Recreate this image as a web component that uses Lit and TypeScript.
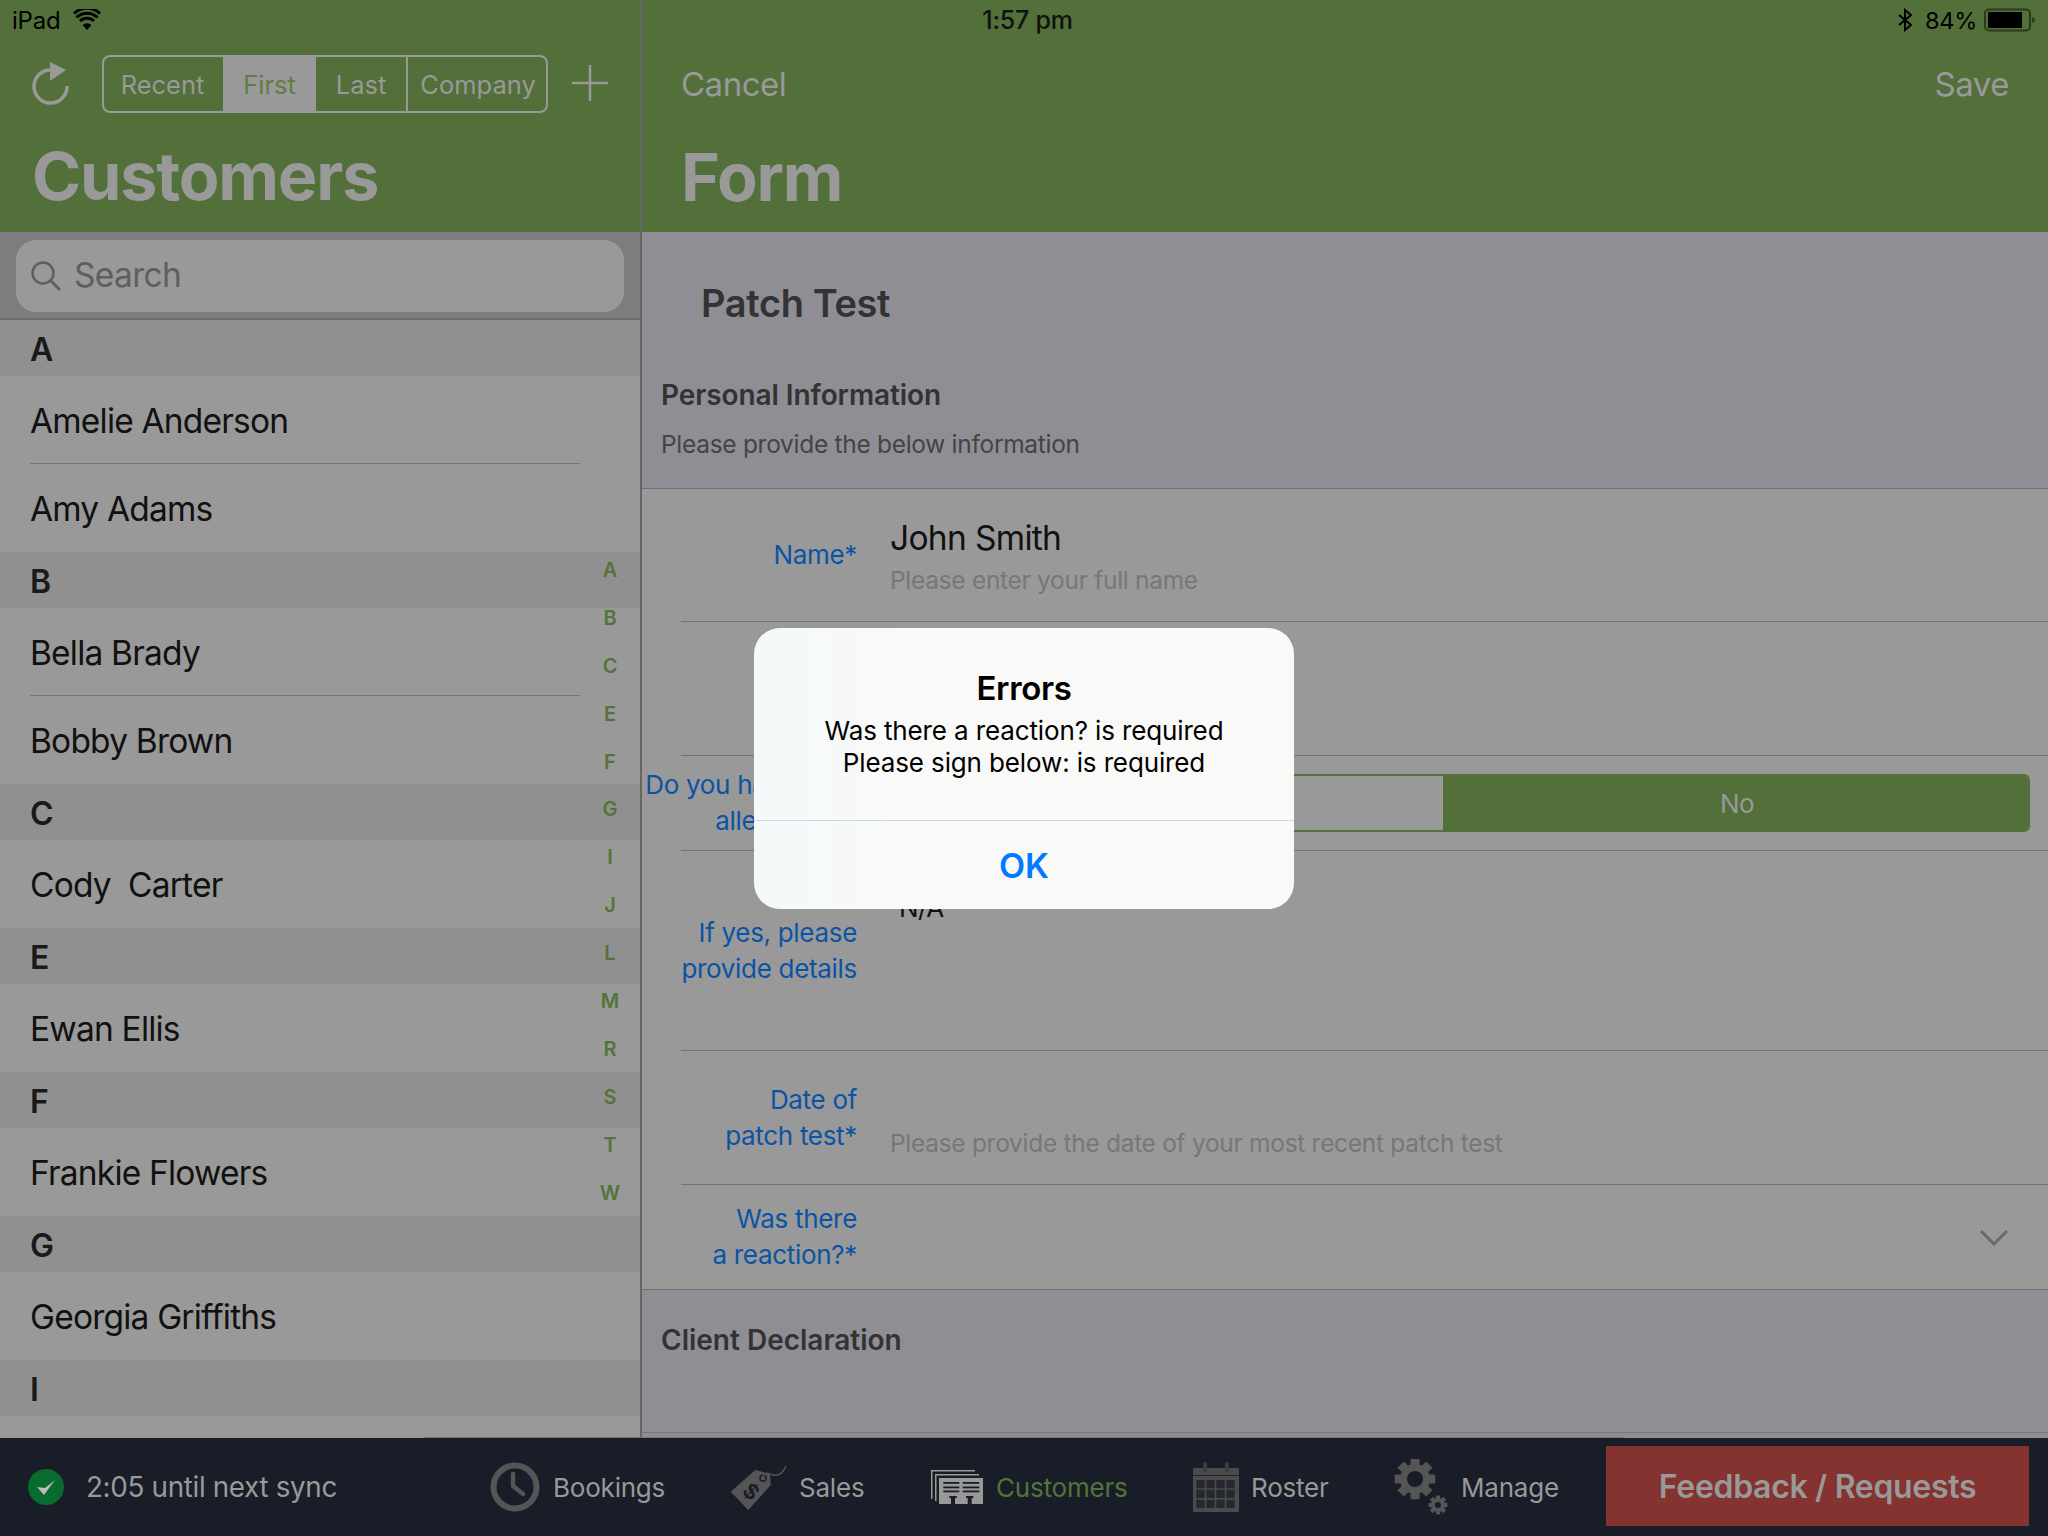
import { LitElement, html, css, svg } from "lit";
import { customElement } from "lit/decorators.js";

const SECTIONS: [string, string[]][] = [
  ["A", ["Amelie Anderson", "Amy Adams"]],
  ["B", ["Bella Brady", "Bobby Brown"]],
  ["C", ["Cody  Carter"]],
  ["E", ["Ewan Ellis"]],
  ["F", ["Frankie Flowers"]],
  ["G", ["Georgia Griffiths"]],
  ["I", []],
];
const INDEX = "ABCEFGIJLMRSTW".split("");

const gear = (cx: number, cy: number, r: number, hole: number, color: string, bg: string) => svg`
  ${[0, 45, 90, 135].map(
    (a) => svg`<rect x=${cx - r * 0.3} y=${cy - r * 1.35} width=${r * 0.6} height=${r * 2.7} fill=${color} transform="rotate(${a} ${cx} ${cy})"/>`
  )}
  <circle cx=${cx} cy=${cy} r=${r} fill=${color}/>
  <circle cx=${cx} cy=${cy} r=${hole} fill=${bg}/>`;

@customElement("app-root")
export class AppRoot extends LitElement {
  static styles = css`
    :host {
      display: block;
      width: 2048px;
      height: 1536px;
      position: relative;
      overflow: hidden;
      font-family: Inter, "Liberation Sans", sans-serif;
      background: #999;
      color: #111;
    }
    .screen { display: flex; flex-direction: column; height: 1536px; }
    .panes { display: flex; height: 1438px; }
    .left { width: 640px; flex: none; display: flex; flex-direction: column; position: relative; border-right: 2px solid #666; overflow: hidden; }
    .right { flex: 1; display: flex; flex-direction: column; overflow: hidden; }

    .status { position: absolute; left: 0; top: 0; width: 2048px; height: 40px; display: grid; grid-template-columns: 1fr auto 1fr; align-items: center; font-size: 24px; color: #000; letter-spacing: -0.01em; z-index: 2; box-sizing: border-box; padding: 0 12px 0 12px; }
    .st-l { display: flex; align-items: center; gap: 13px; }
    .st-c { font-weight: 500; font-size: 25px; padding-left: 7px; color: #111; }
    .st-r { display: flex; align-items: center; justify-content: flex-end; gap: 7px; }
    .st-r span { margin-left: 5px; font-size: 23.5px; }

    .head { height: 232px; background: #536f3a; box-sizing: border-box; flex: none; }
    .lhead { padding: 55px 0 0 30px; }
    .tools { display: flex; align-items: center; height: 58px; }
    .seg { display: flex; margin-left: 32px; height: 58px; width: 446px; box-sizing: border-box; border: 2px solid #999; border-radius: 8px; overflow: hidden; color: #999; font-size: 25.500px; }
    .seg div { display: flex; align-items: center; justify-content: center; box-sizing: border-box; }
    .seg .s1 { width: 119px; padding-right: 2px; }
    .seg .s2 { width: 93px; background: #999; color: #5f7f40; }
    .seg .s3 { width: 92px; border-right: 2px solid #999; }
    .seg .s4 { flex: 1; padding-left: 2px; }
    .plus { margin-left: 24px; transform: translateY(-1px); }
    .big { font-size: 66.500px; font-weight: 700; color: #999; letter-spacing: -0.018em; line-height: 78px; }
    .lhead .big { margin: 24px 0 0 2px; }

    .searchwrap { height: 88px; flex: none; box-sizing: border-box; background: #7d7d7f; border-bottom: 2px solid #6e6e6e; padding: 8px 16px 6px; }
    .search { height: 72px; border-radius: 20px; background: #999; display: flex; align-items: center; padding-left: 14px; gap: 12px; color: #5f5f5f; font-size: 33.500px; letter-spacing: -0.02em; }
    .search span { transform: translateY(-1px); }

    .sec { height: 56px; flex: none; box-sizing: border-box; padding: 2px 0 0 30px; background: #909090; display: flex; align-items: center; font-size: 32px; font-weight: 600; color: #1a1a1a; }
    .row { height: 88px; flex: none; box-sizing: border-box; display: flex; align-items: center; margin-left: 30px; width: 550px; font-size: 33.500px; padding-top: 1px; color: #111; letter-spacing: -0.024em; white-space: pre; }
    .row.sep { border-bottom: 1px solid #767676; padding-top: 2px; }
    .index { position: absolute; left: 590px; top: 547px; width: 40px; display: flex; flex-direction: column; align-items: center; color: #557339; font-size: 20px; font-weight: 600; }
    .index span { height: 47.900px; line-height: 47.900px; }

    .rhead { padding: 48px 39px 0 39px; }
    .nav { display: flex; justify-content: space-between; align-items: center; height: 72px; color: #999; font-size: 33px; letter-spacing: -0.015em; }
    .rhead .big { margin: 18px 0 0 0; }

    .intro { height: 257px; flex: none; box-sizing: border-box; background: #8f8e94; border-bottom: 1px solid #707070; padding: 46px 0 0 19px; color: #333; }
    .intro h1 { margin: 0 0 0 40px; font-size: 38px; line-height: 50px; font-weight: 600; letter-spacing: -0.01em; }
    .intro h2 { margin: 49px 0 0 0; font-size: 28px; line-height: 36px; font-weight: 600; letter-spacing: -0.003em; }
    .intro p { margin: 14px 0 0 0; font-size: 24.500px; line-height: 34px; color: #444; letter-spacing: -0.012em; }

    .f { display: flex; flex: none; box-sizing: border-box; margin-left: 39px; border-bottom: 1px solid #757575; }
    .f.last { margin-left: 0; padding-left: 39px; border-bottom-color: #707070; }
    .lab { width: 176px; flex: none; display: flex; flex-direction: column; align-items: flex-end; color: #0b53a3; font-size: 26px; line-height: 36px; white-space: nowrap; letter-spacing: -0.012em; }
    .val { margin-left: 33px; flex: 1; font-size: 33.500px; position: relative; letter-spacing: -0.02em; }
    .hint { font-size: 24.500px; color: #777; letter-spacing: -0.012em; }
    .h1 { height: 133px; } .h1 .lab { padding-top: 48px; } .h1 .val { padding-top: 25px; line-height: 48px; }
    .h1 .hint { line-height: 36px; }
    .h2 { height: 134px; }
    .h3 { height: 95px; }
    .h3 .lab { padding-top: 11px; }
    .wide1 { margin-right: -1px; padding-right: 13px; }
    .wide2 { padding-right: 16px; }
    .toggle { position: absolute; left: 0; right: 18px; top: 18px; height: 58px; display: flex; box-sizing: border-box; border: 2px solid #536f3a; border-radius: 6px; overflow: hidden; }
    .toggle .off { flex: 1; }
    .toggle .on { width: 585px; background: #536f3a; color: #999; display: flex; align-items: center; justify-content: center; font-size: 26px; padding-left: 3px; box-sizing: border-box; }
    .h4 { height: 200px; } .h4 .lab { padding-top: 64px; } .h4 .val { font-size: 26px; line-height: 36px; padding: 39px 0 0 9px; }
    .h5 { height: 134px; } .h5 .lab { padding-top: 31px; } .h5 .val { padding-top: 74px; line-height: 36px; }
    .h6 { height: 105px; } .h6 .lab { padding-top: 16px; } .h6 .val { display: flex; justify-content: flex-end; padding: 45px 40px 0 0; }

    .outro { flex: 1; background: #8f8e94; box-sizing: border-box; padding-top: 32px; color: #333; display: flex; flex-direction: column; }
    .outro h2 { margin: 0 0 0 19px; font-size: 28px; line-height: 36px; font-weight: 600; }
    .outro i { display: block; margin-top: 74px; border-top: 1px solid #767676; }

    .bar { height: 98px; flex: none; background: #181d27; display: flex; align-items: center; box-sizing: border-box; position: relative; color: #999; font-size: 26px; letter-spacing: -0.008em; }
    .bar::before { content: ""; position: absolute; left: 424px; width: 1200px; top: -1px; height: 1px; background: #787878; }
    .sync { display: flex; align-items: center; margin-left: 28px; gap: 22px; width: 450px; flex: none; font-size: 27.800px; letter-spacing: -0.012em; }
    .tab { display: flex; align-items: center; flex: none; }
    .tab.on { color: #557339; }
    .t1 { width: 252px; padding-left: 12px; box-sizing: border-box; gap: 13px; }
    .t2 { width: 201px; gap: 9px; }
    .t3 { width: 262px; gap: 13px; }
    .t4 { width: 201px; gap: 12px; }
    .t5 { gap: 11px; }
    .fb { margin-left: auto; margin-right: 19px; width: 423px; height: 80px; margin-top: -2px; background: #843330; display: flex; align-items: center; justify-content: center; font-size: 32px; font-weight: 600; color: #999; letter-spacing: -0.01em; }

    .modal { position: absolute; left: 754px; top: 628px; width: 540px; height: 281px; border-radius: 26px; background: linear-gradient(90deg, #f5f9fa, #f9f9f8 35%); z-index: 3; display: flex; flex-direction: column; color: #000; text-align: center; }
    .m-top { height: 193px; flex: none; box-sizing: border-box; padding-top: 40px; border-bottom: 1px solid #cfd8dc; }
    .m-top h3 { margin: 0; font-size: 33px; line-height: 40px; font-weight: 600; letter-spacing: -0.01em; }
    .m-top p { margin: 7px 0 0; font-size: 26px; line-height: 32px; letter-spacing: -0.005em; }
    .m-ok { flex: 1; display: flex; align-items: center; justify-content: center; color: #007aff; font-size: 34px; font-weight: 600; }
  `;

  private status() {
    return html`<div class="status">
      <div class="st-l">iPad
        <svg width="28" height="22" viewBox="0 0 28 22"><path d="M14 21 9.6 16a6.5 6.5 0 0 1 8.8 0Z" fill="#000"/><path d="M3.5 9.5a15 15 0 0 1 21 0M7 13a10 10 0 0 1 14 0" transform="translate(0 -1)" fill="none" stroke="#000" stroke-width="3"/><path d="M1 5.5a19 19 0 0 1 26 0" transform="translate(0 -1)" fill="none" stroke="#000" stroke-width="3"/></svg>
      </div>
      <div class="st-c">1:57 pm</div>
      <div class="st-r">
        <svg width="16" height="24" viewBox="0 0 16 24"><path d="M2 7l12 10-6 5V2l6 5L2 17" fill="none" stroke="#000" stroke-width="2"/></svg>
        <span>84%</span>
        <svg width="52" height="24" viewBox="0 0 52 24"><rect x="1" y="1.500" width="45" height="21" rx="4" fill="none" stroke="#2c3b1f" stroke-width="2"/><rect x="4" y="4" width="34" height="16" fill="#000"/><path d="M48 9c2 .5 3 1.500 3 3s-1 2.500-3 3Z" fill="#2c3b1f"/></svg>
      </div>
    </div>`;
  }

  private leftPane() {
    return html`<div class="left">
      <div class="head lhead">
        <div class="tools">
          <svg width="40" height="46" viewBox="0 0 40 46"><path d="M21 9A16.500 16.500 0 1 0 37 25" fill="none" stroke="#999" stroke-width="3.500"/><path d="M20 1 36 9 20 20Z" fill="#999"/></svg>
          <div class="seg"><div class="s1">Recent</div><div class="s2">First</div><div class="s3">Last</div><div class="s4">Company</div></div>
          <svg class="plus" width="36" height="36" viewBox="0 0 36 36"><path d="M18 0v36M0 18h36" stroke="#999" stroke-width="2.500"/></svg>
        </div>
        <div class="big">Customers</div>
      </div>
      <div class="searchwrap"><div class="search">
        <svg width="32" height="32" viewBox="0 0 32 32"><circle cx="13" cy="13" r="10.500" fill="none" stroke="#5f5f5f" stroke-width="2.500"/><path d="M20.500 20.500 30 30" stroke="#5f5f5f" stroke-width="3"/></svg>
        <span>Search</span></div></div>
      ${SECTIONS.map(([l, names]) => html`
        <div class="sec">${l}</div>
        ${names.map((n, i) => html`<div class="row ${i < names.length - 1 ? "sep" : ""}">${n}</div>`)}
      `)}
      <div class="index">${INDEX.map((c) => html`<span>${c}</span>`)}</div>
    </div>`;
  }

  private rightPane() {
    return html`<div class="right">
      <div class="head rhead">
        <div class="nav"><span>Cancel</span><span>Save</span></div>
        <div class="big">Form</div>
      </div>
      <div class="intro">
        <h1>Patch Test</h1>
        <h2>Personal Information</h2>
        <p>Please provide the below information</p>
      </div>
      <div class="f h1"><div class="lab">Name*</div><div class="val">John Smith<div class="hint">Please enter your full name</div></div></div>
      <div class="f h2"></div>
      <div class="f h3"><div class="lab"><span class="wide1">Do you have any</span><span class="wide2">allergies?*</span></div><div class="val"><div class="toggle"><div class="off"></div><div class="on">No</div></div></div></div>
      <div class="f h4"><div class="lab"><span>If yes, please</span><span>provide details</span></div><div class="val">N/A</div></div>
      <div class="f h5"><div class="lab"><span>Date of</span><span>patch test*</span></div><div class="val hint">Please provide the date of your most recent patch test</div></div>
      <div class="f h6 last"><div class="lab"><span>Was there</span><span>a reaction?*</span></div><div class="val">
        <svg width="28" height="16" viewBox="0 0 28 16"><path d="M1 1l13 13L27 1" fill="none" stroke="#6a6a6a" stroke-width="3"/></svg>
      </div></div>
      <div class="outro"><h2>Client Declaration</h2><i></i></div>
    </div>`;
  }

  private tabbar() {
    const ic = "#555";
    const bg = "#181d27";
    return html`<div class="bar">
      <div class="sync">
        <svg width="36" height="36" viewBox="0 0 36 36"><circle cx="18" cy="18" r="18" fill="#0a6b2e"/><path d="M9 18l7 8 11-15-10 8Z" fill="#bbb"/></svg>
        2:05 until next sync
      </div>
      <div class="tab t1">
        <svg width="50" height="50" viewBox="0 0 50 50"><circle cx="25" cy="25" r="21.500" fill="none" stroke=${ic} stroke-width="6"/><path d="M23 12v12l10 8" fill="none" stroke=${ic} stroke-width="4.500" stroke-linecap="round" stroke-linejoin="round"/></svg>
        Bookings
      </div>
      <div class="tab t2">
        <svg width="60" height="46" viewBox="0 0 60 46"><path d="M.7 27.700 25.300 6 40 10l.7 11-22.400 25Z" fill=${ic}/><circle cx="33" cy="14.300" r="3" fill="none" stroke=${bg} stroke-width="1.500"/><path d="M33 12c3-5 6-2 10-1s9 0 13-9" fill="none" stroke=${ic} stroke-width="1.500"/><text x="20.700" y="35" text-anchor="middle" font-size="23" font-weight="700" fill=${bg} transform="rotate(42 20.700 27.700)" font-family="Liberation Sans">$</text></svg>
        Sales
      </div>
      <div class="tab on t3">
        <svg width="52" height="34" viewBox="0 0 52 34"><path d="M.75 29V.75H44M4.750 31V4.750H48" fill="none" stroke="#999" stroke-width="1.500"/><rect x="8" y="8" width="44" height="26" fill="#999"/><g fill=${bg}>${[12, 16.5, 20.5].map((y) => svg`<rect x="12.300" y=${y} width="16" height="1.800"/><rect x="31.700" y=${y} width="16.600" height="1.800"/>`)}<path d="M18.300 26h7.400v2H24v6h-4v-6h-1.700ZM35 26h7.400v2h-1.700v6h-4v-6H35Z"/></g></svg>
        Customers
      </div>
      <div class="tab t4">
        <svg width="46" height="50" viewBox="0 0 46 50"><rect x="0" y="6" width="46" height="44" rx="1.500" fill="#4b4b4c"/><rect x="10" y="0" width="4" height="10" rx="1.500" fill="#3c3d40"/><rect x="32" y="0" width="4" height="10" rx="1.500" fill="#3c3d40"/><g fill="#25282f"><rect x="0" y="13" width="46" height="1"/>${[3.3, 13.3, 23.3, 33.3].flatMap((c) => [18, 27.7, 37.7].map((r) => svg`<rect x=${c} y=${r} width="8.400" height="8.300" />`))}</g></svg>
        Roster
      </div>
      <div class="tab t5">
        <svg width="56" height="56" viewBox="0 0 56 56">${gear(21, 20, 15, 8, ic, bg)}${gear(44, 46, 7, 3, ic, bg)}</svg>
        Manage
      </div>
      <div class="fb">Feedback / Requests</div>
    </div>`;
  }

  render() {
    return html`<div class="screen">
        <div class="panes">${this.leftPane()}${this.rightPane()}</div>
        ${this.tabbar()}
      </div>
      ${this.status()}
      <div class="modal">
        <div class="m-top"><h3>Errors</h3><p>Was there a reaction? is required<br />Please sign below: is required</p></div>
        <div class="m-ok">OK</div>
      </div>`;
  }
}
